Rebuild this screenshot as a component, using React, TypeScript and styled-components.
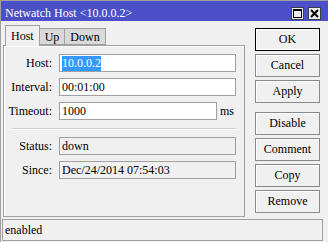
import React from "react";
import styled, { createGlobalStyle } from "styled-components";

const Global = createGlobalStyle`
  * { box-sizing: border-box; }
  html, body { margin: 0; padding: 0; background: #f0f0f0; }
  body { font-family: "Liberation Serif", "Times New Roman", serif; font-size: 12px; color: #000; }
`;

const Window = styled.div`
  width: 328px;
  height: 242px;
  overflow: hidden;
  background: #f0f0f0;
  border-top: 1px solid #a0a0a0;
  border-left: 1px solid #a0a0a0;
  display: flex;
  flex-direction: column;
`;

const TitleBar = styled.div`
  height: 20px;
  flex: none;
  background: #4c50c8;
  display: flex;
  align-items: center;
  padding-left: 4px;
  padding-right: 7px;
`;

const TitleText = styled.div`
  color: #fff;
  font-size: 12px;
  padding-top: 4px;
  white-space: nowrap;
`;

const TitleButtons = styled.div`
  margin-left: auto;
  display: flex;
  gap: 4px;
  padding-top: 4px;
`;

const TitleButton = styled.div`
  width: 13px;
  height: 13px;
  background: #ececec;
  border: 1px solid #404040;
  display: flex;
  align-items: center;
  justify-content: center;
`;

const Main = styled.div`
  height: 196px;
  flex: none;
  display: flex;
`;

const LeftPane = styled.div`
  margin-left: 2px;
  width: 242px;
  display: flex;
  flex-direction: column;
`;

const TabRow = styled.div`
  margin-top: 4px;
  height: 20px;
  display: flex;
  align-items: flex-end;
  padding-left: 2px;
  position: relative;
  z-index: 1;
`;

const Tab = styled.div<{ $active?: boolean; $first?: boolean }>`
  height: ${(p) => (p.$active ? "21px" : "17px")};
  margin-bottom: ${(p) => (p.$active ? "-1px" : "0")};
  padding: ${(p) => (p.$active ? "3px 5px 0 5px" : "1px 5px 0 5px")};
  background: ${(p) => (p.$active ? "#f0f0f0" : "#d9d9d9")};
  border: 1px solid #a0a0a0;
  border-bottom: ${(p) => (p.$active ? "none" : "1px solid #a0a0a0")};
  border-left: ${(p) => (p.$first ? "1px solid #a0a0a0" : "none")};
  font-size: 12px;
  line-height: 14px;
  white-space: nowrap;
`;

const Panel = styled.div`
  height: 172px;
  border: 1px solid #a0a0a0;
  box-shadow: inset 1px 1px 0 #fff;
  padding-top: 8px;
  display: flex;
  flex-direction: column;
`;

const Row = styled.div<{ $mt?: number }>`
  display: flex;
  align-items: center;
  height: 18px;
  margin-top: ${(p) => p.$mt ?? 0}px;
`;

const Label = styled.div`
  width: 48px;
  text-align: right;
  margin-right: 7px;
  white-space: nowrap;
`;

const Field = styled.div<{ $w: number; $ro?: boolean }>`
  width: ${(p) => p.$w}px;
  height: 18px;
  background: ${(p) => (p.$ro ? "#f0f0f0" : "#fff")};
  border: 1px solid #a0a0a0;
  padding-left: 2px;
  display: flex;
  align-items: center;
  white-space: nowrap;
  overflow: hidden;
`;

const Selected = styled.span`
  background: #3399ff;
  color: #fff;
`;

const Unit = styled.div`
  margin-left: 3px;
`;

const Separator = styled.div`
  margin: 8px 8px 0 8px;
  height: 2px;
  border-top: 1px solid #d0d0d0;
  border-bottom: 1px solid #fff;
`;

const RightPane = styled.div`
  margin-left: 10px;
  padding-top: 7px;
  width: 65px;
  display: flex;
  flex-direction: column;
`;

const Button = styled.div<{ $default?: boolean; $mt?: number }>`
  height: 23px;
  margin-top: ${(p) => p.$mt ?? 3}px;
  background: #f0f0f0;
  border: 1px solid ${(p) => (p.$default ? "#000" : "#8a8a8a")};
  box-shadow: ${(p) =>
    p.$default ? "inset 0 0 0 1px #fff" : "inset 1px 1px 0 #fff"};
  display: flex;
  align-items: center;
  justify-content: center;
  font-size: 12px;
`;

const StatusBar = styled.div`
  margin: 2px 5px 0 1px;
  height: 22px;
  border: 1px solid #a0a0a0;
  padding-left: 2px;
  display: flex;
  align-items: center;
`;

export default function App() {
  return (
    <>
      <Global />
      <Window>
        <TitleBar>
          <TitleText>Netwatch Host &lt;10.0.0.2&gt;</TitleText>
          <TitleButtons>
            <TitleButton>
              <svg width="9" height="9" viewBox="0 0 9 9">
                <rect x="0.5" y="0.5" width="8" height="8" fill="none" stroke="#000" />
                <rect x="0" y="0" width="9" height="2" fill="#000" />
              </svg>
            </TitleButton>
            <TitleButton>
              <svg width="9" height="9" viewBox="0 0 9 9">
                <path d="M1 1 L8 8 M8 1 L1 8" stroke="#000" strokeWidth="2" />
              </svg>
            </TitleButton>
          </TitleButtons>
        </TitleBar>
        <Main>
          <LeftPane>
            <TabRow>
              <Tab $active $first>Host</Tab>
              <Tab>Up</Tab>
              <Tab>Down</Tab>
            </TabRow>
            <Panel>
              <Row>
                <Label>Host:</Label>
                <Field $w={177}>
                  <Selected>10.0.0.2</Selected>
                </Field>
              </Row>
              <Row $mt={6}>
                <Label>Interval:</Label>
                <Field $w={177}>00:01:00</Field>
              </Row>
              <Row $mt={6}>
                <Label>Timeout:</Label>
                <Field $w={158}>1000</Field>
                <Unit>ms</Unit>
              </Row>
              <Separator />
              <Row $mt={7}>
                <Label>Status:</Label>
                <Field $w={177} $ro>down</Field>
              </Row>
              <Row $mt={6}>
                <Label>Since:</Label>
                <Field $w={177} $ro>Dec/24/2014 07:54:03</Field>
              </Row>
            </Panel>
          </LeftPane>
          <RightPane>
            <Button $default $mt={0}>OK</Button>
            <Button>Cancel</Button>
            <Button>Apply</Button>
            <Button $mt={9}>Disable</Button>
            <Button>Comment</Button>
            <Button>Copy</Button>
            <Button>Remove</Button>
          </RightPane>
        </Main>
        <StatusBar>enabled</StatusBar>
      </Window>
    </>
  );
}
